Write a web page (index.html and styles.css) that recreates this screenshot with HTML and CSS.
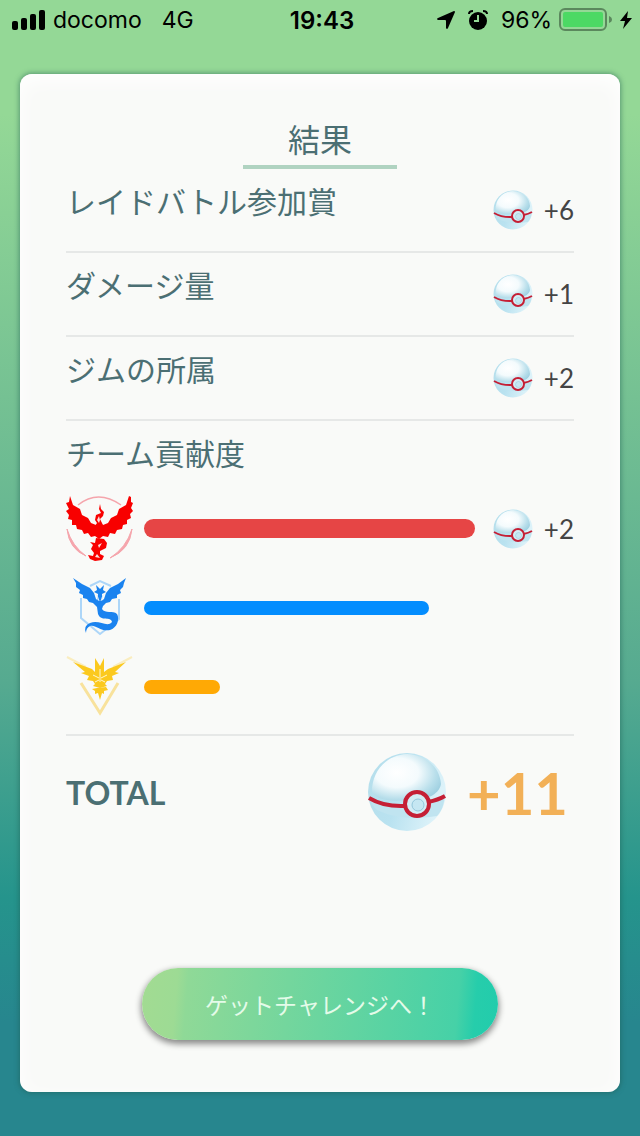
FILE: index.html
```html
<!DOCTYPE html>
<html lang="ja">

<head>
    <meta charset="UTF-8">
    <meta name="viewport" content="width=device-width, initial-scale=1.0">
    <title>結果</title>
    <link rel="stylesheet" href="styles.css">
</head>

<body>
    <!-- shared ball drawing -->
    <svg class="defs" aria-hidden="true">
        <defs>
            <radialGradient id="ballTop" cx="0.36" cy="0.4" r="0.7">
                <stop offset="0" stop-color="#ffffff" />
                <stop offset="0.45" stop-color="#f4fbfd" />
                <stop offset="0.8" stop-color="#b9dfeb" />
                <stop offset="1" stop-color="#9fd0e1" />
            </radialGradient>
            <linearGradient id="ballBottom" x1="0" y1="0" x2="1" y2="0.3">
                <stop offset="0" stop-color="#b5deeb" />
                <stop offset="0.5" stop-color="#b9e2f0" />
                <stop offset="1" stop-color="#dcf2f9" />
            </linearGradient>
            <symbol id="ball" viewBox="0 0 80 80">
                <circle cx="40" cy="40" r="39" fill="url(#ballBottom)" />
                <path d="M3 46C12 53 25 55 38 54C56 54 70 50 77 44C78 52 74 60 70 64Q35 70 10 58Q5 54 3 46Z" fill="#c0e4f0" />
                <path d="M5 40C5 18 20 3 40 2C60 3 73 16 74 32C72 44 56 49 40 48C24 50 10 48 5 40Z" fill="url(#ballTop)" />
                <path d="M2 46Q17 55 38 54M61 50Q71 48 78 44" fill="none" stroke="#c51f35" stroke-width="4" />
                <circle cx="50" cy="52" r="12" fill="#d3edf5" stroke="#c51f35" stroke-width="4" />
                <circle cx="51" cy="53" r="6" fill="#c5e7f2" stroke="#93c7db" stroke-width="1" />
            </symbol>
        </defs>
    </svg>

    <header class="status">
        <div class="carrier">
            <svg class="signal" viewBox="0 0 34 20" aria-hidden="true">
                <rect x="0" y="11" width="6" height="9" rx="2" />
                <rect x="9" y="8" width="6" height="12" rx="2" />
                <rect x="18" y="4" width="6" height="16" rx="2" />
                <rect x="27" y="0" width="6" height="20" rx="2" />
            </svg>
            <span>docomo</span>
            <span class="network">4G</span>
        </div>
        <div class="clock">19:43</div>
        <div class="power">
            <svg class="arrow" viewBox="0 0 18 18" aria-hidden="true">
                <path d="M17 0Q18 0 18 1L11 17Q10 19 9 17V10Q9 9 8 9H1Q-1 8 1 7Z" />
            </svg>
            <svg class="alarm" viewBox="0 0 20 20" aria-hidden="true">
                <circle cx="10" cy="11" r="9" />
                <path d="M1 4Q1 1 5 1M19 4Q19 1 15 1" fill="none" stroke="#000" stroke-width="2" />
                <path d="M10 5V11H6" fill="none" stroke="#94d896" stroke-width="2" />
            </svg>
            <span>96%</span>
            <svg class="battery" viewBox="0 0 54 24" aria-hidden="true">
                <rect x="1" y="1" width="46" height="21" rx="5" fill="none" stroke="#5b885d" stroke-width="2" />
                <rect x="4" y="4" width="40" height="15" rx="2" fill="#4cd964" />
                <path d="M50 8Q53 9 53 12Q53 14 50 15Z" fill="#5b885d" />
            </svg>
            <svg class="bolt" viewBox="0 0 12 18" aria-hidden="true">
                <path d="M8 0L0 10H5L3 18L12 7H7Z" />
            </svg>
        </div>
    </header>

    <main class="card">
        <h1 class="title">結果</h1>

        <section class="row">
            <h2 class="label">レイドバトル参加賞</h2>
            <div class="prize"><svg class="ball" aria-hidden="true"><use href="#ball" /></svg><span>+6</span></div>
        </section>
        <section class="row">
            <h2 class="label">ダメージ量</h2>
            <div class="prize"><svg class="ball" aria-hidden="true"><use href="#ball" /></svg><span>+1</span></div>
        </section>
        <section class="row">
            <h2 class="label">ジムの所属</h2>
            <div class="prize"><svg class="ball" aria-hidden="true"><use href="#ball" /></svg><span>+2</span></div>
        </section>

        <section class="teams">
            <h2 class="label">チーム貢献度</h2>
            <div class="team">
                <svg class="emblem" viewBox="0 0 68 70" aria-hidden="true">
                    <path d="M12 11Q32 -5 55 11" fill="none" stroke="#f5a5ac" stroke-width="1.5" />
                    <path d="M1 35Q3 55 20 62Q6 52 1 35ZM66 35Q64 56 44 64Q60 54 66 35Z" fill="#f5a5ac" stroke="#f5a5ac" />
                    <g fill="#f80000">
                        <path d="M4 2L7 11L14 15L16 21L22 24L25 29L30 31L33 30L37 31L42 29L45 24L51 21L53 15L60 11L63 2L65 3L65 8L67 9L65 14L67 17L64 20L65 24L61 26L61 30L57 31L56 35L51 36L49 40L44 39L42 43L37 42L33 45L29 42L25 43L22 39L18 40L16 36L11 35L10 31L6 31L6 26L2 25L3 21L0 17L3 15L0 9L3 8Z" />
                        <path d="M34 10L35 15L38 18L37 22L34 25L37 31L29 32L31 29L29 26L30 21L35 19L33 15Z" />
                        <path d="M30 44L38 45L41 49L40 54L34 57L34 60L38 62L36 66L29 67L24 65L22 61L27 62L28 59L25 55L27 51L24 48L29 49Z" />
                    </g>
                    <path d="M33 22L31 26L33 29L34 26ZM36 49L32 51L33 54ZM31 60L29 63L34 64Z" fill="#fbdede" />
                </svg>
                <div class="track"><div class="bar valor" style="width: 100%"></div></div>
                <div class="prize"><svg class="ball" aria-hidden="true"><use href="#ball" /></svg><span>+2</span></div>
            </div>
            <div class="team">
                <svg class="emblem" viewBox="0 0 68 70" aria-hidden="true">
                    <path d="M24 13L34 8L45 13M15 25V45L34 61L53 46V26" fill="none" stroke="#add6f8" stroke-width="2" />
                    <g fill="#1b83ef">
                        <path d="M7 5L16 11L24 15L28 20L30 26L34 29L38 26L40 20L44 15L52 11L60 5L58 10L57 14L54 17L55 20L51 22L51 25L46 26L44 29L40 30L37 33L36 36C39 41 47 37 51 41C54 46 51 55 44 57C35 59 29 51 24 53Q20 55 20 60Q17 53 24 50C33 46 41 55 46 49C45 43 35 49 32 41L31 34L27 30L23 29L21 26L17 25L17 22L13 20L14 17L10 14L10 10Z" />
                        <path d="M30 12L34 16L38 12L37 17L40 19L36 21L36 34L31 34L32 21L28 19L31 17Z" />
                    </g>
                    <path d="M31 22L33 28M37 22L35 28" stroke="#d6ebfe" stroke-width="1" />
                </svg>
                <div class="track"><div class="bar mystic" style="width: 86%"></div></div>
                <div class="prize"></div>
            </div>
            <div class="team">
                <svg class="emblem" viewBox="0 0 68 70" aria-hidden="true">
                    <path d="M15 31L34 61L52 31" fill="none" stroke="#f8e29c" stroke-width="3" />
                    <path d="M1 5L20 15M66 5L47 15" fill="none" stroke="#faedbf" stroke-width="2" />
                    <g fill="#fbc91e">
                        <path d="M7 10L26 17L29 20L29 6L34 14L38 6L38 20L42 17L60 10L49 20L53 21L46 24L47 28L41 29L39 32L41 34L34 36L27 34L29 32L27 29L21 28L23 24L15 21L19 20Z" />
                        <path d="M31 36L40 35L42 38L38 39L38 42L36 41L34 48L32 41L29 42L29 39L26 37Z" />
                    </g>
                    <path d="M34 17V30M27 23L33 26M41 23L35 26M29 30L33 28M39 30L35 28" fill="none" stroke="#fff7cf" stroke-width="1" />
                </svg>
                <div class="track"><div class="bar instinct" style="width: 23%"></div></div>
                <div class="prize"></div>
            </div>
        </section>

        <section class="total">
            <h2 class="total-label">TOTAL</h2>
            <svg class="ball-big" aria-hidden="true"><use href="#ball" /></svg>
            <span class="total-count">+11</span>
        </section>

        <button class="go" type="button">ゲットチャレンジへ！</button>
    </main>
</body>

</html>
```

FILE: styles.css
```css
* {
    box-sizing: border-box;
}

body {
    margin: 0;
    min-height: 100vh;
    font-family: Lato, "Noto Sans CJK JP", sans-serif;
    color: #4b6f73;
    background: linear-gradient(#94d896 0%, #94d896 10%, #56aa90 60%, #25948c 79%, #27868e 90%, #27868e 100%);
}

h1,
h2 {
    margin: 0;
    font-weight: 300;
}

.defs {
    position: absolute;
    width: 0;
    height: 0;
}

/* status bar */
.status {
    display: grid;
    grid-template-columns: 1fr auto 1fr;
    align-items: center;
    height: 40px;
    padding: 0 8px 0 12px;
    font-family: Inter, sans-serif;
    font-size: 23px;
    color: #000;
}

.carrier,
.power {
    display: flex;
    align-items: center;
}

.carrier {
    gap: 7px;
}

.network {
    margin-left: 13px;
}

.clock {
    font-size: 24px;
    font-weight: 600;
}

.power {
    justify-content: flex-end;
    gap: 7px;
}

.signal {
    width: 34px;
    height: 20px;
}

.arrow {
    width: 18px;
    height: 18px;
    margin-right: 6px;
}

.alarm {
    width: 20px;
    height: 20px;
    margin-right: 6px;
}

.battery {
    width: 54px;
    height: 24px;
}

.bolt {
    width: 12px;
    height: 18px;
}

/* result card */
.card {
    display: flex;
    flex-direction: column;
    margin: 34px 20px 44px;
    padding: 40px 46px 52px;
    border-radius: 12px;
    background: #f9faf8;
    box-shadow: 0 0 5px 1px rgba(30, 90, 80, 0.5), inset 0 6px 20px 0 #fff;
}

.title {
    align-self: center;
    width: 154px;
    border-bottom: 4px solid #b0d3c1;
    font-size: 32px;
    font-weight: 400;
    line-height: 51px;
    text-align: center;
}

.row {
    display: flex;
    justify-content: space-between;
    height: 84px;
    border-bottom: 2px solid #e6e8e7;
}

.label {
    font-size: 30px;
    font-weight: 400;
    line-height: 64px;
}

.prize {
    display: flex;
    align-items: center;
    justify-content: space-between;
    flex: none;
    width: 81px;
    font-size: 26px;
    color: #444;
}

.ball {
    width: 40px;
    height: 40px;
}

.teams {
    padding-bottom: 8px;
    border-bottom: 2px solid #e6e8e7;
}

.teams .label {
    margin-bottom: 4px;
}

.team {
    display: flex;
    align-items: center;
    height: 79px;
}

.emblem {
    flex: none;
    width: 68px;
    height: 70px;
    margin-right: 10px;
}

.track {
    flex: 1;
    margin-right: 18px;
}

.bar {
    height: 14px;
    border-radius: 10px;
}

.valor {
    height: 19px;
    background: #e64545;
}

.mystic {
    background: #048dfe;
}

.instinct {
    background: #ffa905;
}

.total {
    display: flex;
    align-items: center;
    height: 112px;
    padding-right: 6px;
}

.total-label {
    flex: 1;
    font-size: 32px;
    font-weight: 700;
}

.ball-big {
    width: 80px;
    height: 80px;
    margin-right: 20px;
}

.total-count {
    font-size: 58px;
    font-weight: 700;
    color: #f2b057;
}

.go {
    align-self: center;
    width: 70%;
    height: 72px;
    margin-top: 120px;
    border: 0;
    border-radius: 36px;
    background: linear-gradient(95deg, #a2db92 0%, #9ddb94 10%, #8fd997 13%, #46d1a7 88%, #26cdab 93%, #22ccac 100%);
    box-shadow: 0 3px 6px 1px rgba(0, 0, 0, 0.45);
    font-family: "Noto Sans CJK JP", sans-serif;
    font-size: 23px;
    color: #e4fbe9;
}
```
